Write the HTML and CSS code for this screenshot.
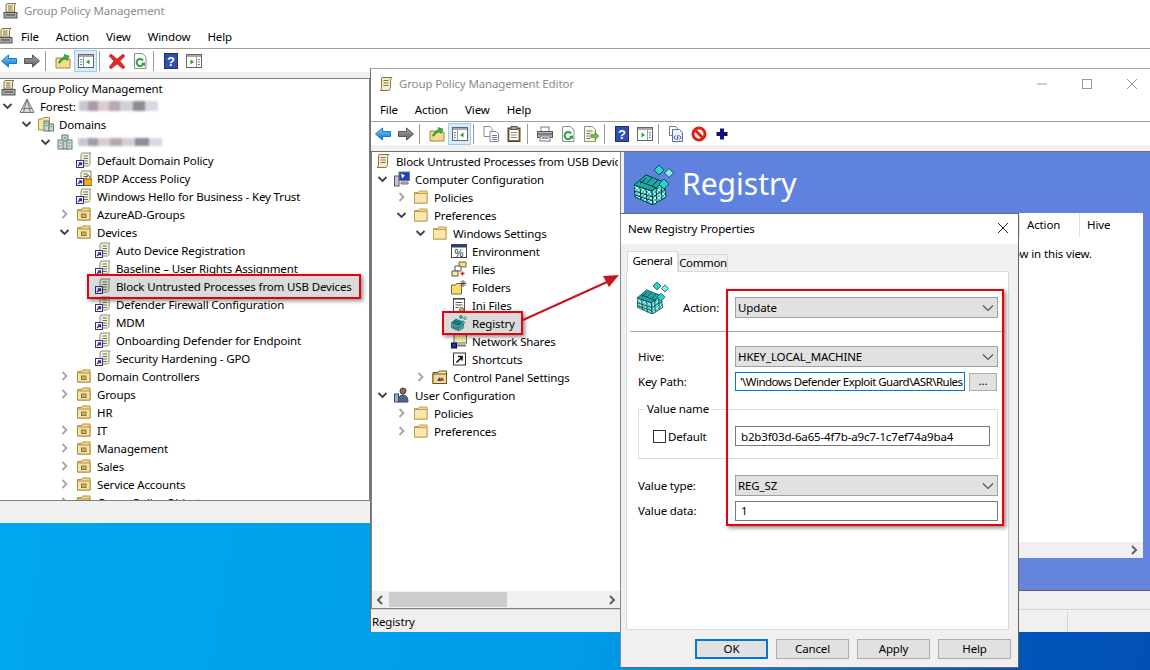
FILE: index.html
```html
<!DOCTYPE html>
<html>
<head>
  <title>Group Policy Management</title>
  <link rel="stylesheet" href="styles.css">
</head>
<body>
<svg class="defs" width="0" height="0">
  <defs>
    <pattern id="chk" width="4" height="4" patternUnits="userSpaceOnUse"><rect width="4" height="4" fill="#28c4c4"/><rect width="2" height="2" fill="#c4f6f2"/><rect x="2" y="2" width="2" height="2" fill="#c4f6f2"/></pattern>
    <linearGradient id="blueArrow" x1="0" y1="0" x2="0" y2="1"><stop offset="0" stop-color="#7fd0f7"/><stop offset="1" stop-color="#0a70c8"/></linearGradient>
    <linearGradient id="grayArrow" x1="0" y1="0" x2="0" y2="1"><stop offset="0" stop-color="#a8a8a8"/><stop offset="1" stop-color="#5c5c5c"/></linearGradient>
  </defs>
  <symbol id="scroll" viewBox="0 0 16 16"><path d="M4 1.500h10c-1 1-1.500 2-1.500 3v7c0 1.500-1 3-2.500 3H2c1-.5 1.500-1.500 1.500-2.500v-8C3.500 2 3.500 2 4 1.500z" fill="#f6ecc8" stroke="#85754a"/><path d="M5.500 4.500h5M5.500 7h5M5.500 9.500h5" stroke="#85754a"/></symbol>
  <symbol id="gpmc" viewBox="0 0 16 16"><path d="M4 .5h9c-1 .8-1.500 1.500-1.500 2.500v6H3V2z" fill="#f6ecc8" stroke="#85754a"/><path d="M5 3h4.500M5 5h4.500M5 7h4.500" stroke="#85754a"/><rect x="1" y="9.500" width="13" height="5.500" fill="#a8a8a8" stroke="#555"/><path d="M3 12h9" stroke="#444"/></symbol>
  <symbol id="gpo" viewBox="0 0 16 16"><path d="M6 1h9c-.8.8-1 1.500-1 2.500v8c0 1.500-1 2.500-2 2.500H5V3z" fill="#f7f2dc" stroke="#8a8a7a"/><path d="M7.500 4h4.500M7.500 6.500h4.500M7.500 9h4.500M7.500 11.500h4.500" stroke="#6e6e60"/><rect x=".5" y="8.500" width="7" height="7" fill="#fff" stroke="#33337a"/><path d="M2 14l3-3M2.800 10.800h2.700v2.700" fill="none" stroke="#2a2aa8" stroke-width="1.300"/></symbol>
  <symbol id="gpolock" viewBox="0 0 16 16"><path d="M6 1h9v10H5V3z" fill="#f7f2dc" stroke="#8a8a7a"/><path d="M7.500 4h4.500M7.500 6.500h4.500" stroke="#6e6e60"/><rect x="8" y="9" width="8" height="6.500" fill="#e8b020" stroke="#8a6a10"/><path d="M10 9V7.500a2 2 0 0 1 4 0V9" fill="none" stroke="#8a6a10"/><rect x=".5" y="8.500" width="7" height="7" fill="#fff" stroke="#33337a"/><path d="M2 14l3-3M2.800 10.800h2.700v2.700" fill="none" stroke="#2a2aa8" stroke-width="1.300"/></symbol>
  <symbol id="forest" viewBox="0 0 16 16"><path d="M8 1l7 13.500H1z" fill="#dcdcdc" stroke="#777"/><path d="M8 1L4.500 14.500M8 1l3.500 13.500M3 10.500h10" stroke="#777" fill="none"/></symbol>
  <symbol id="ou" viewBox="0 0 16 16"><path d="M1.500 3.500h4l1-1.500h7.500v12h-12.500z" fill="#f3d98f" stroke="#b09040"/><rect x="1.500" y="5" width="12.500" height="9" fill="#f6e3a6" stroke="#b09040"/><rect x="5.500" y="8" width="4.500" height="3.500" fill="#c9b477" stroke="#8a7430"/></symbol>
  <symbol id="folder" viewBox="0 0 16 16"><path d="M1.500 3.500h4l1-1.500h7.500v12h-12.500z" fill="#f3d98f" stroke="#c0a050"/><rect x="1.500" y="4.500" width="12.500" height="9.500" fill="#fbe7ae" stroke="#c0a050"/></symbol>
  <symbol id="domains" viewBox="0 0 16 16"><path d="M.5 3h4l1-1.500h6V14H.5z" fill="#f6e3a6" stroke="#b09040"/><rect x="6" y="5" width="5" height="10" fill="#cfd6d6" stroke="#6a7a7a"/><rect x="11" y="8" width="4.500" height="7" fill="#cfd6d6" stroke="#6a7a7a"/><path d="M7.500 7h2M7.500 9.500h2M12.500 10.500h1.500" stroke="#30a040"/></symbol>
  <symbol id="domain" viewBox="0 0 16 16"><rect x="5" y="1" width="6" height="14" fill="#c8d0d0" stroke="#6a7a7a"/><rect x="1" y="6" width="5" height="9" fill="#d8dede" stroke="#6a7a7a"/><rect x="10" y="6" width="5" height="9" fill="#d8dede" stroke="#6a7a7a"/><path d="M7 4h2M7 7h2M2.500 9h2M11.500 9h2M2.500 12h2M11.500 12h2" stroke="#30a040"/></symbol>
  <symbol id="computer" viewBox="0 0 16 16"><rect x="5" y="1" width="10.500" height="8.500" fill="#1a3fc8" stroke="#777"/><path d="M7 2.500l4 2-3 3z" fill="#fff"/><path d="M7 11h7v2H7z" fill="#bbb" stroke="#777"/><rect x=".5" y="5" width="4.500" height="10" fill="#c0c8d8" stroke="#556"/></symbol>
  <symbol id="user" viewBox="0 0 16 16"><circle cx="9" cy="4" r="3" fill="#8a6a50" stroke="#54402e"/><path d="M4 15c0-5 2-7 5-7s5 2 5 7z" fill="#4a6a8a" stroke="#33485e"/><rect x=".5" y="7" width="4" height="8" fill="#8fb2de" stroke="#446"/></symbol>
  <symbol id="env" viewBox="0 0 16 16"><rect x=".5" y="1.500" width="15" height="13" fill="#fff" stroke="#444"/><rect x="1" y="2" width="14" height="2.500" fill="#2a3a8a"/></symbol>
  <symbol id="files" viewBox="0 0 16 16"><path d="M8 1h7v5H8z" fill="#f2dc90" stroke="#806a20"/><path d="M4 5h6v5H4z" fill="#fff" stroke="#555"/><path d="M1 10h6v5H1z" fill="#f8ef9a" stroke="#555"/><path d="M9.500 12.500h4M11.500 10.500v4" stroke="#d02020" stroke-width="1.300"/></symbol>
  <symbol id="folders" viewBox="0 0 16 16"><path d="M.5 6h4l1-1.500h5V15H.5z" fill="#f3e070" stroke="#7a6a20"/><path d="M12 1v7M8.500 4.500h7M9.500 2l5 5M14.500 2l-5 5" stroke="#555"/></symbol>
  <symbol id="ini" viewBox="0 0 16 16"><rect x="2.500" y="1.500" width="11" height="14" fill="#fff" stroke="#555"/><path d="M3 1v2M5 1v2M7 1v2M9 1v2M11 1v2M13 1v2" stroke="#333"/><path d="M4.500 5.500h7M4.500 8h7M4.500 10.500h3" stroke="#555"/><circle cx="10.500" cy="12.500" r="2" fill="#e8c820" stroke="#556"/></symbol>
  <symbol id="cube" viewBox="0 0 40 40"><path d="M12 10l18 7-12 9L0 20z" fill="#1ea8a8" stroke="#063c3c"/><path d="M0 20l18 6 1 14L1 32z" fill="url(#chk)" stroke="#063c3c"/><path d="M18 26l12-9 2 15-13 8z" fill="url(#chk)" stroke="#063c3c"/><path d="M6 22l1 13M12 24l1 14M.5 26l18 6M1 30l18 6M22 23l1 14M27 19l1 16M18.500 32l13-8M6 16.500l18 7M12 13.500l-6 5M18 13l-6 6M24 15l-6 6" fill="none" stroke="#063c3c"/><path d="M25 0l5 5-5 5-5-5z" fill="#30d0d0" stroke="#0a5858"/><path d="M35 3.500l4.500 4.500-4.500 4.500-4.500-4.500z" fill="#8ee8e4" stroke="#0a5858"/><path d="M30 14l5 5-5 5-5-5z" fill="#30d0d0" stroke="#0a5858"/></symbol>
  <symbol id="shares" viewBox="0 0 16 16"><rect x="3" y="1" width="12.500" height="9" fill="#e8e8e0" stroke="#666"/><path d="M4 3h11v5H4z" fill="#f4ee90"/><rect x=".5" y="10" width="5" height="5" fill="#1a2fb0" stroke="#111"/><path d="M6 12.500h9" stroke="#777" stroke-width="2"/></symbol>
  <symbol id="shortcut" viewBox="0 0 16 16"><rect x="2.500" y="2" width="12" height="12" fill="#fff" stroke="#333"/><path d="M5.500 11.500l5-5M7 5.500h4v4" fill="none" stroke="#111" stroke-width="1.600"/></symbol>
  <symbol id="cpanel" viewBox="0 0 16 16"><path d="M1 3.500h5l1-1.500h7.500v12.500H1z" fill="#f6e3a6" stroke="#6a5820"/><rect x="1" y="5" width="13.500" height="9.500" fill="#f3dc8a" stroke="#6a5820"/><path d="M5 12l2.500-4 2.500 4z" fill="#2848c0"/><path d="M7.500 11.500l2.500-3.500 2.500 3.500z" fill="#d03030"/></symbol>
  <symbol id="back" viewBox="0 0 16 16"><path d="M.5 8L7.500 2v3.500h8v5h-8V14z" fill="url(#blueArrow)" stroke="#1478c8"/></symbol>
  <symbol id="fwd" viewBox="0 0 16 16"><path d="M15.500 8L8.500 2v3.500h-8v5h8V14z" fill="url(#grayArrow)" stroke="#555"/></symbol>
  <symbol id="up" viewBox="0 0 16 16"><path d="M1 5h5l1 1h8v9H1z" fill="#f6dc8e" stroke="#a08a40"/><path d="M3.500 10C5 6 7 4 10 3.500L9 1.500l5 1.500-2 4.500-1-2C8.500 6 6 8 5 10z" fill="#38b040" stroke="#1c7c28" stroke-width=".6"/></symbol>
  <symbol id="tree" viewBox="0 0 16 16"><rect x=".5" y="1.500" width="15" height="13" fill="#fff" stroke="#666"/><path d="M1 2h14v2H1z" fill="#a8a8a8"/><path d="M5.500 4v10" stroke="#999"/><path d="M2 6.500h2M2 9h2M2 11.500h2" stroke="#5a7ab0"/><path d="M11.500 6.500v5L8 9z" fill="#28a038"/></symbol>
  <symbol id="pane" viewBox="0 0 16 16"><rect x=".5" y="1.500" width="15" height="13" fill="#fff" stroke="#666"/><path d="M1 2h14v2H1z" fill="#a8a8a8"/><path d="M10.500 4v10" stroke="#999"/><path d="M12 6.500h2M12 9h2M12 11.500h2" stroke="#5a7ab0"/><path d="M4.500 6.500v5L8 9z" fill="#28a038"/></symbol>
  <symbol id="del" viewBox="0 0 16 16"><path d="M2 1l6 5 6-5 2 2-5 5 5 6-2 2-6-5-6 5-2-2 5-6-5-5z" fill="#e0282c" stroke="#b81c20" stroke-width=".5"/></symbol>
  <symbol id="refresh" viewBox="0 0 16 16"><path d="M2.500.5h8l3.500 3.500v11.500H2.500z" fill="#fafafa" stroke="#909090"/><path d="M11 7.500a3.500 3.500 0 1 0 .5 3" fill="none" stroke="#28a048" stroke-width="2"/><path d="M9 10l4-.5 0 4z" fill="#28a048"/></symbol>
  <symbol id="help" viewBox="0 0 16 16"><rect x="1.500" y=".5" width="13" height="15" fill="#2c4fb0" stroke="#1c2f78"/></symbol>
  <symbol id="copy" viewBox="0 0 16 16"><path d="M1 .5h6l2 2v8H1z" fill="#fff" stroke="#888"/><path d="M7 5.500h6l2.500 2.500v7.500H7z" fill="#fff" stroke="#888"/><path d="M9 9.500h5M9 11.500h5M9 13.500h5" stroke="#5a7ab0"/></symbol>
  <symbol id="paste" viewBox="0 0 16 16"><rect x="2" y="2" width="12" height="13.500" fill="#8a6a40" stroke="#5a4020"/><rect x="3.500" y="3.500" width="9" height="10.500" fill="#fff"/><rect x="5" y=".5" width="6" height="3" fill="#a8a8a8" stroke="#555"/><path d="M5 6.500h6M5 9h6M5 11.500h6" stroke="#888"/></symbol>
  <symbol id="print" viewBox="0 0 16 16"><rect x="4" y="1" width="8" height="5" fill="#fff" stroke="#777"/><rect x=".5" y="5.500" width="15" height="6" fill="#b8b8b8" stroke="#555"/><rect x="3" y="10" width="10" height="5" fill="#fff" stroke="#777"/><path d="M1 8h14" stroke="#444"/><path d="M4.500 12h7" stroke="#33a"/></symbol>
  <symbol id="export" viewBox="0 0 16 16"><path d="M1.500.5h8l3 3V15.500h-11z" fill="#fbf5dc" stroke="#909080"/><path d="M3.500 5h6M3.500 7.500h4M3.500 10h4M3.500 12.500h4" stroke="#777"/><path d="M8 8.500h4V6l4 4-4 4v-2.500H8z" fill="#68c050" stroke="#3a8a2c" stroke-width=".6"/></symbol>
  <symbol id="xml" viewBox="0 0 16 16"><path d="M1.500 .5h6l2 2v7h-8z" fill="#fff" stroke="#778"/><path d="M4.500 3.500h7l3 3v9h-10z" fill="#eef2fa" stroke="#5a6a9a"/><path d="M7.500 9.500l-1.500 2 1.500 2M11.500 9.500l1.500 2-1.500 2M10 9l-1 5" fill="none" stroke="#2a3a9a"/></symbol>
  <symbol id="stop" viewBox="0 0 16 16"><circle cx="8" cy="8" r="6" fill="#fff" stroke="#e02010" stroke-width="3"/><path d="M3.500 3.500l9 9" stroke="#e02010" stroke-width="3"/></symbol>
  <symbol id="plus" viewBox="0 0 16 16"><path d="M6 2.500h4v3.500h3.500v4H10v3.500H6V10H2.500V6H6z" fill="#101080"/></symbol>
  <symbol id="open" viewBox="0 0 10 10"><path d="M1 3l4 4 4-4" fill="none" stroke="#404040" stroke-width="1.800"/></symbol>
  <symbol id="closed" viewBox="0 0 10 10"><path d="M3 1l4 4-4 4" fill="none" stroke="#a6a6a6" stroke-width="1.800"/></symbol>
  <symbol id="chev" viewBox="0 0 12 8"><path d="M1 1.500l5 5 5-5" fill="none" stroke="#555" stroke-width="1.200"/></symbol>
</svg>

<!-- back window -->
<div class="window main-win">
  <div class="titlebar">
    <svg class="ico"><use href="#gpmc"/></svg>
    <span class="title">Group Policy Management</span>
  </div>
  <div class="menubar">
    <svg class="ico menu-ico"><use href="#gpmc"/></svg>
    <span>File</span><span>Action</span><span>View</span><span>Window</span><span>Help</span>
  </div>
  <div class="toolbar tb-main">
    <div class="tb"><svg class="ico"><use href="#back"/></svg></div>
    <div class="tb"><svg class="ico"><use href="#fwd"/></svg></div>
    <div class="sep"></div>
    <div class="tb"><svg class="ico"><use href="#up"/></svg></div>
    <div class="tb on"><svg class="ico"><use href="#tree"/></svg></div>
    <div class="sep"></div>
    <div class="tb"><svg class="ico"><use href="#del"/></svg></div>
    <div class="tb"><svg class="ico"><use href="#refresh"/></svg></div>
    <div class="sep"></div>
    <div class="tb"><svg class="ico" viewBox="0 0 16 16"><use href="#help"/><text class="glyph-q" x="8" y="13">?</text></svg></div>
    <div class="tb"><svg class="ico"><use href="#pane"/></svg></div>
  </div>
  <div class="strip"></div>
  <div class="tree main-tree">
    <div class="row d0"><svg class="ico"><use href="#gpmc"/></svg><span>Group Policy Management</span></div>
    <div class="row d1"><svg class="tw"><use href="#open"/></svg><svg class="ico"><use href="#forest"/></svg><span>Forest:</span><i class="blur forest-blur"></i></div>
    <div class="row d2"><svg class="tw"><use href="#open"/></svg><svg class="ico"><use href="#domains"/></svg><span>Domains</span></div>
    <div class="row d3"><svg class="tw"><use href="#open"/></svg><svg class="ico"><use href="#domain"/></svg><i class="blur dom-blur"></i></div>
    <div class="row d4"><b class="tw"></b><svg class="ico"><use href="#gpo"/></svg><span>Default Domain Policy</span></div>
    <div class="row d4"><b class="tw"></b><svg class="ico"><use href="#gpolock"/></svg><span>RDP Access Policy</span></div>
    <div class="row d4"><b class="tw"></b><svg class="ico"><use href="#gpo"/></svg><span>Windows Hello for Business - Key Trust</span></div>
    <div class="row d4"><svg class="tw"><use href="#closed"/></svg><svg class="ico"><use href="#ou"/></svg><span>AzureAD-Groups</span></div>
    <div class="row d4"><svg class="tw"><use href="#open"/></svg><svg class="ico"><use href="#ou"/></svg><span>Devices</span></div>
    <div class="row d5"><b class="tw"></b><svg class="ico"><use href="#gpo"/></svg><span>Auto Device Registration</span></div>
    <div class="row d5"><b class="tw"></b><svg class="ico"><use href="#gpo"/></svg><span>Baseline – User Rights Assignment</span></div>
    <div class="row d5"><b class="tw"></b><svg class="ico"><use href="#gpo"/></svg><span>Block Untrusted Processes from USB Devices</span></div>
    <div class="row d5"><b class="tw"></b><svg class="ico"><use href="#gpo"/></svg><span>Defender Firewall Configuration</span></div>
    <div class="row d5"><b class="tw"></b><svg class="ico"><use href="#gpo"/></svg><span>MDM</span></div>
    <div class="row d5"><b class="tw"></b><svg class="ico"><use href="#gpo"/></svg><span>Onboarding Defender for Endpoint</span></div>
    <div class="row d5"><b class="tw"></b><svg class="ico"><use href="#gpo"/></svg><span>Security Hardening - GPO</span></div>
    <div class="row d4"><svg class="tw"><use href="#closed"/></svg><svg class="ico"><use href="#ou"/></svg><span>Domain Controllers</span></div>
    <div class="row d4"><svg class="tw"><use href="#closed"/></svg><svg class="ico"><use href="#ou"/></svg><span>Groups</span></div>
    <div class="row d4"><b class="tw"></b><svg class="ico"><use href="#ou"/></svg><span>HR</span></div>
    <div class="row d4"><svg class="tw"><use href="#closed"/></svg><svg class="ico"><use href="#ou"/></svg><span>IT</span></div>
    <div class="row d4"><svg class="tw"><use href="#closed"/></svg><svg class="ico"><use href="#ou"/></svg><span>Management</span></div>
    <div class="row d4"><svg class="tw"><use href="#closed"/></svg><svg class="ico"><use href="#ou"/></svg><span>Sales</span></div>
    <div class="row d4"><svg class="tw"><use href="#closed"/></svg><svg class="ico"><use href="#ou"/></svg><span>Service Accounts</span></div>
    <div class="row d4"><svg class="tw"><use href="#closed"/></svg><svg class="ico"><use href="#ou"/></svg><span>Group Policy Objects</span></div>
  </div>
  <div class="statusbar main-status"></div>
</div>

<!-- editor window -->
<div class="window editor-win">
  <div class="titlebar ed-title">
    <svg class="ico"><use href="#scroll"/></svg>
    <span class="title">Group Policy Management Editor</span>
    <div class="caption">
      <svg class="cap" viewBox="0 0 12 12"><path d="M1 6h10" stroke="#999"/></svg>
      <svg class="cap" viewBox="0 0 12 12"><rect x="1.500" y="1.500" width="9" height="9" fill="none" stroke="#999"/></svg>
      <svg class="cap" viewBox="0 0 12 12"><path d="M1 1l10 10M11 1L1 11" stroke="#999"/></svg>
    </div>
  </div>
  <div class="menubar ed-menu"><span>File</span><span>Action</span><span>View</span><span>Help</span></div>
  <div class="toolbar">
    <div class="tb"><svg class="ico"><use href="#back"/></svg></div>
    <div class="tb"><svg class="ico"><use href="#fwd"/></svg></div>
    <div class="sep"></div>
    <div class="tb"><svg class="ico"><use href="#up"/></svg></div>
    <div class="tb on"><svg class="ico"><use href="#tree"/></svg></div>
    <div class="sep"></div>
    <div class="tb"><svg class="ico"><use href="#copy"/></svg></div>
    <div class="tb"><svg class="ico"><use href="#paste"/></svg></div>
    <div class="sep"></div>
    <div class="tb"><svg class="ico"><use href="#print"/></svg></div>
    <div class="tb"><svg class="ico"><use href="#refresh"/></svg></div>
    <div class="tb"><svg class="ico"><use href="#export"/></svg></div>
    <div class="sep"></div>
    <div class="tb"><svg class="ico" viewBox="0 0 16 16"><use href="#help"/><text class="glyph-q" x="8" y="13">?</text></svg></div>
    <div class="tb"><svg class="ico"><use href="#pane"/></svg></div>
    <div class="sep"></div>
    <div class="tb"><svg class="ico"><use href="#xml"/></svg></div>
    <div class="tb"><svg class="ico"><use href="#stop"/></svg></div>
    <div class="tb"><svg class="ico"><use href="#plus"/></svg></div>
  </div>
  <div class="ed-strip"></div>
  <div class="ed-body">
    <div class="ed-left">
      <div class="tree ed-tree">
        <div class="row d0"><svg class="ico"><use href="#scroll"/></svg><span>Block Untrusted Processes from USB Devices</span></div>
        <div class="row d1"><svg class="tw"><use href="#open"/></svg><svg class="ico"><use href="#computer"/></svg><span>Computer Configuration</span></div>
        <div class="row d2"><svg class="tw"><use href="#closed"/></svg><svg class="ico"><use href="#folder"/></svg><span>Policies</span></div>
        <div class="row d2"><svg class="tw"><use href="#open"/></svg><svg class="ico"><use href="#folder"/></svg><span>Preferences</span></div>
        <div class="row d3"><svg class="tw"><use href="#open"/></svg><svg class="ico"><use href="#folder"/></svg><span>Windows Settings</span></div>
        <div class="row d4"><b class="tw"></b><svg class="ico" viewBox="0 0 16 16"><use href="#env"/><text class="glyph-pct" x="8" y="13.500">%</text></svg><span>Environment</span></div>
        <div class="row d4"><b class="tw"></b><svg class="ico"><use href="#files"/></svg><span>Files</span></div>
        <div class="row d4"><b class="tw"></b><svg class="ico"><use href="#folders"/></svg><span>Folders</span></div>
        <div class="row d4"><b class="tw"></b><svg class="ico"><use href="#ini"/></svg><span>Ini Files</span></div>
        <div class="row d4"><b class="tw"></b><svg class="ico"><use href="#cube"/></svg><span>Registry</span></div>
        <div class="row d4"><b class="tw"></b><svg class="ico"><use href="#shares"/></svg><span>Network Shares</span></div>
        <div class="row d4"><b class="tw"></b><svg class="ico"><use href="#shortcut"/></svg><span>Shortcuts</span></div>
        <div class="row d3"><svg class="tw"><use href="#closed"/></svg><svg class="ico"><use href="#cpanel"/></svg><span>Control Panel Settings</span></div>
        <div class="row d1"><svg class="tw"><use href="#open"/></svg><svg class="ico"><use href="#user"/></svg><span>User Configuration</span></div>
        <div class="row d2"><svg class="tw"><use href="#closed"/></svg><svg class="ico"><use href="#folder"/></svg><span>Policies</span></div>
        <div class="row d2"><svg class="tw"><use href="#closed"/></svg><svg class="ico"><use href="#folder"/></svg><span>Preferences</span></div>
      </div>
      <div class="hscroll">
        <svg class="sb-arrow" viewBox="0 0 10 10"><path d="M7 1L3 5l4 4" fill="none" stroke="#606060" stroke-width="2"/></svg>
        <div class="sb-track"><div class="sb-thumb"></div></div>
        <svg class="sb-arrow" viewBox="0 0 10 10"><path d="M3 1l4 4-4 4" fill="none" stroke="#606060" stroke-width="2"/></svg>
      </div>
    </div>
    <div class="ed-right">
      <div class="blue-panel">
        <div class="blue-head">
          <svg class="cube-big"><use href="#cube"/></svg>
          <span>Registry</span>
        </div>
        <div class="list">
          <div class="list-head"><span>Action</span><span>Hive</span></div>
          <div class="list-empty">There are no items to show in this view.</div>
          <div class="list-scroll"><svg class="sb-arrow" viewBox="0 0 10 10"><path d="M3 1l4 4-4 4" fill="none" stroke="#606060" stroke-width="2"/></svg></div>
        </div>
      </div>
      <div class="right-foot"></div>
    </div>
  </div>
  <div class="statusbar ed-status">Registry<i class="status-div"></i></div>
</div>

<!-- properties dialog -->
<div class="window dialog">
  <div class="dlg-title">
    <span>New Registry Properties</span>
    <svg class="dlg-x" viewBox="0 0 12 12"><path d="M1 1l10 10M11 1L1 11" stroke="#222"/></svg>
  </div>
  <div class="dlg-body">
    <div class="tabs">
      <div class="tab active">General</div>
      <div class="tab">Common</div>
    </div>
    <div class="page">
      <div class="form-row action-row">
        <svg class="cube-mid"><use href="#cube"/></svg>
        <label class="lbl-action">Action:</label>
        <div class="combo">Update<svg class="chev"><use href="#chev"/></svg></div>
      </div>
      <div class="hr"></div>
      <div class="form-row"><label>Hive:</label><div class="combo">HKEY_LOCAL_MACHINE<svg class="chev"><use href="#chev"/></svg></div></div>
      <div class="form-row key-row"><label>Key Path:</label><div class="edit focus"><span class="keytext">'\Windows Defender Exploit Guard\ASR\Rules</span></div><div class="dots">...</div></div>
      <fieldset class="group">
        <legend>Value name</legend>
        <div class="check-wrap"><i class="check"></i><span>Default</span></div>
        <div class="edit guid">b2b3f03d-6a65-4f7b-a9c7-1c7ef74a9ba4</div>
      </fieldset>
      <div class="form-row type-row"><label>Value type:</label><div class="combo">REG_SZ<svg class="chev"><use href="#chev"/></svg></div></div>
      <div class="form-row data-row"><label>Value data:</label><div class="edit">1</div></div>
    </div>
    <div class="buttons">
      <div class="btn default">OK</div>
      <div class="btn">Cancel</div>
      <div class="btn">Apply</div>
      <div class="btn">Help</div>
    </div>
  </div>
</div>

<!-- red callouts -->
<div class="mark mark-gpo"></div>
<div class="mark mark-reg"></div>
<div class="mark mark-form"></div>
<svg class="arrow" width="1150" height="670" viewBox="0 0 1150 670">
  <path d="M523 320L607 282" stroke="#c8141c" stroke-width="2"/>
  <path d="M619 275L603 276L609 287z" fill="#c8141c"/>
</svg>
</body>
</html>
```
FILE: styles.css
```css
* {
  box-sizing: border-box;
}

html, body {
  margin: 0;
  padding: 0;
}

body {
  width: 1150px;
  height: 670px;
  position: relative;
  overflow: hidden;
  background: linear-gradient(100deg, #00a8f0 0%, #009ce9 55%, #0056ba 88%, #0250b4 100%);
  font-family: "Noto Sans", "Open Sans", sans-serif;
  font-size: 11.5px;
  letter-spacing: -.14px;
  color: #000;
}

.defs {
  position: absolute;
}

.window {
  position: absolute;
  display: flex;
  flex-direction: column;
  background: #fff;
}

.ico {
  width: 16px;
  height: 16px;
  flex: none;
  display: block;
}

.glyph-q {
  font: 700 13px "Liberation Sans", sans-serif;
  text-anchor: middle;
  fill: #fff;
}

.glyph-pct {
  font: 10px "Liberation Sans", sans-serif;
  text-anchor: middle;
  fill: #222;
}

/* windows */
.main-win {
  left: 0;
  top: 0;
  width: 1150px;
  height: 523px;
}

.editor-win {
  left: 370px;
  top: 68px;
  width: 780px;
  height: 564px;
  border-left: 1px solid #707070;
  border-top: 1px solid #a8a8a8;
}

.dialog {
  left: 620px;
  top: 213px;
  width: 399px;
  height: 455px;
  border: 1px solid #666;
  border-left-color: #888;
}

/* title + menu */
.titlebar {
  height: 25px;
  flex: none;
  display: flex;
  align-items: center;
  gap: 5px;
  padding: 0 0 4px 3px;
}

.title {
  color: #8c8c8c;
}

.ed-title {
  height: 29px;
  gap: 5px;
  padding: 0 0 0 7px;
  position: relative;
}

.caption {
  margin-left: auto;
  display: flex;
  gap: 33px;
  padding-right: 12px;
}

.cap {
  width: 12px;
  height: 12px;
}

.menubar {
  height: 24px;
  flex: none;
  display: flex;
  align-items: center;
  gap: 17px;
  padding-left: 21px;
  border-bottom: 1px solid #a0a0a0;
  position: relative;
}

.menu-ico {
  position: absolute;
  left: -2px;
  top: 3px;
}

.ed-menu {
  padding-left: 9px;
}

.toolbar {
  height: 23px;
  flex: none;
  display: flex;
  align-items: center;
  background: #fff;
}

.tb-main .tb:first-child {
  margin-left: -3px;
}

.tb {
  width: 23px;
  height: 22px;
  display: flex;
  align-items: center;
  justify-content: center;
}

.tb.on {
  background: #d9ebf9;
  border: 1px solid #9fcbee;
}

.sep {
  width: 1px;
  height: 20px;
  background: #9a9a9a;
  margin: 0 5px 0 2px;
}

.strip {
  height: 7px;
  flex: none;
  background: #f0f0f0;
  border-bottom: 1px solid #808080;
}

.ed-strip {
  height: 7px;
  flex: none;
  background: #f0f0f0;
  border-bottom: 1px solid #707070;
}

/* trees */
.tree {
  flex: 1;
  overflow: hidden;
}

.main-tree {
  min-height: 0;
  border-right: 1px solid #808080;
  width: 370px;
}

.row {
  height: 18px;
  display: flex;
  align-items: center;
  white-space: nowrap;
}

.row > span {
  margin-left: 5px;
}

.row.d0 { padding-left: 1px; }
.row.d1 { padding-left: 0; }
.row.d2 { padding-left: 19px; }
.row.d3 { padding-left: 38px; }
.row.d4 { padding-left: 57px; }
.row.d5 { padding-left: 76px; }

.tw {
  width: 19px;
  height: 10px;
  flex: none;
  display: block;
  padding-right: 4px;
}

.blur {
  display: block;
  height: 10px;
  filter: blur(1.2px);
  background: linear-gradient(90deg, #c8c8d4 0 12%, #a89aa8 12% 24%, #d8ccd0 24% 38%, #b8a8b0 38% 52%, #cfd0d8 52% 68%, #8f8a94 68% 84%, #d8d8e4 84%);
}

.forest-blur {
  width: 79px;
  margin-left: 3px;
}

.dom-blur {
  width: 84px;
  margin-left: 5px;
  height: 8px;
}

.main-status {
  border-top: 1px solid #808080;
}

.statusbar {
  height: 23px;
  flex: none;
  background: #f0f0f0;
}

/* editor body */
.ed-body {
  flex: 1;
  display: flex;
  min-height: 0;
}

.ed-left {
  width: 250px;
  flex: none;
  display: flex;
  flex-direction: column;
  border: 1px solid #808080;
  border-top: 0;
}

.ed-tree {
  min-height: 0;
  margin-left: 3px;
}

.ed-tree .row.d0 {
  padding-left: 0;
}

.ed-tree .row.d0 > span {
  width: 222px;
  overflow: hidden;
}

.hscroll {
  height: 17px;
  flex: none;
  display: flex;
  align-items: center;
  background: #f0f0f0;
}

.sb-arrow {
  width: 10px;
  height: 10px;
  margin: 0 3px;
  flex: none;
}

.sb-track {
  flex: 1;
  height: 15px;
}

.sb-thumb {
  width: 118px;
  height: 15px;
  background: #cdcdcd;
  margin-left: 1px;
}

.ed-right {
  flex: 1;
  display: flex;
  flex-direction: column;
  background: #f0f0f0;
  padding-left: 3px;
}

.blue-panel {
  height: 438px;
  flex: none;
  background: linear-gradient(180deg, #5f82de, #6484de);
  display: flex;
  flex-direction: column;
  padding-right: 7px;
}

.blue-head {
  height: 61px;
  flex: none;
  display: flex;
  align-items: center;
  gap: 8px;
  padding: 5px 0 0 10px;
  color: #fff;
  font-size: 30px;
  letter-spacing: 0;
}

.blue-head span {
  margin-top: -4px;
}

.cube-big {
  width: 40px;
  height: 40px;
  flex: none;
}

.list {
  flex: 1;
  background: #fff;
  margin-bottom: 32px;
  display: flex;
  flex-direction: column;
}

.list-head {
  height: 24px;
  flex: none;
  display: flex;
  justify-content: flex-end;
  align-items: center;
}

.list-head span {
  width: 60px;
  padding-left: 7px;
  border-left: 1px solid #e0e0e0;
  height: 24px;
  line-height: 24px;
}

.list-head span:last-child {
  width: 64px;
}

.list-empty {
  flex: 1;
  text-align: right;
  padding: 9px 51px 0 0;
}

.list-scroll {
  height: 16px;
  flex: none;
  background: #f0f0f0;
  display: flex;
  justify-content: flex-end;
  align-items: center;
  padding-right: 1px;
}

.right-foot {
  flex: 1;
  border-top: 1px solid #606060;
  margin-left: -3px;
}

.ed-status {
  border-top: 1px solid #d4d4d4;
  padding: 4px 0 0 1px;
  position: relative;
}

.status-div {
  position: absolute;
  left: 696px;
  top: 2px;
  width: 1px;
  height: 20px;
  background: #d4d4d4;
}

/* dialog */
.dlg-title {
  height: 30px;
  flex: none;
  display: flex;
  align-items: center;
  justify-content: space-between;
  padding: 0 9px 2px 7px;
}

.dlg-x {
  width: 12px;
  height: 12px;
}

.dlg-body {
  flex: 1;
  background: #f0f0f0;
  padding: 7px 9px 0 5px;
  display: flex;
  flex-direction: column;
}

.tabs {
  display: flex;
  height: 20px;
  padding-left: 1px;
  align-items: flex-end;
  position: relative;
  z-index: 1;
}

.tab {
  height: 17px;
  width: 50px;
  text-align: center;
  background: #f0f0f0;
  border: 1px solid #d9d9d9;
  border-bottom: 0;
  line-height: 16px;
  letter-spacing: -.35px;
}

.tab.active {
  width: 51px;
  height: 21px;
  background: #fff;
  margin-bottom: -1px;
  line-height: 17px;
}

.page {
  height: 359px;
  flex: none;
  background: #fff;
  border: 1px solid #d9d9d9;
  padding: 25px 10px 0 11px;
}

.form-row {
  display: flex;
  align-items: center;
  height: 21px;
}

.form-row > label {
  width: 97px;
  flex: none;
}

.action-row {
  position: relative;
  padding-left: 45px;
}

.action-row .lbl-action {
  width: 52px;
}

.cube-mid {
  position: absolute;
  left: -1px;
  top: -15px;
  width: 32px;
  height: 32px;
}

.hr {
  height: 1px;
  background: #a8a8a8;
  margin: 13px -7px 14px -8px;
}

.combo {
  flex: 1;
  height: 21px;
  background: #e1e1e1;
  border: 1px solid #a0a0a0;
  padding-left: 2px;
  display: flex;
  align-items: center;
  justify-content: space-between;
}

.chev {
  width: 12px;
  height: 8px;
  margin-right: 3px;
}

.edit {
  flex: 1;
  height: 20px;
  background: #fff;
  border: 1px solid #7a7a7a;
  padding-left: 5px;
  display: flex;
  align-items: center;
  white-space: nowrap;
  overflow: hidden;
}

.key-row {
  margin-top: 5px;
  height: 19px;
}

.edit.focus {
  height: 19px;
  border-color: #0078d7;
  padding-left: 4px;
}

.keytext {
  border-right: 1px solid #000;
  height: 15px;
  line-height: 15px;
  padding-right: 1px;
  letter-spacing: -.52px;
}

.dots {
  width: 28px;
  height: 18px;
  flex: none;
  margin: 0 1px 0 4px;
  background: #e1e1e1;
  border: 1px solid #adadad;
  text-align: center;
  line-height: 14px;
}

.group {
  display: block;
  margin: 12px 0 0 0;
  padding: 0 7px 0 14px;
  height: 56px;
  border: 1px solid #dcdcdc;
}

.group legend {
  padding: 0 2px;
  margin-left: -8px;
  line-height: 12px;
}

.check-wrap {
  width: 82px;
  float: left;
  margin-top: 14px;
  display: flex;
  align-items: center;
  gap: 2px;
}

.check {
  display: block;
  width: 13px;
  height: 13px;
  border: 1px solid #333;
  background: #fff;
}

.guid {
  width: 255px;
  float: left;
  margin-top: 11px;
}

.type-row {
  margin-top: 16px;
}

.data-row {
  margin-top: 4px;
}

.buttons {
  display: flex;
  justify-content: flex-end;
  gap: 8px;
  padding-top: 9px;
  margin-right: -2px;
}

.btn {
  width: 73px;
  height: 20px;
  background: #e1e1e1;
  border: 1px solid #adadad;
  text-align: center;
  line-height: 18px;
}

.btn.default {
  border: 2px solid #0078d7;
  line-height: 16px;
}

/* red callouts */
.mark {
  position: absolute;
  border: 2px solid #e8000c;
  box-shadow: 2px 2px 4px rgba(0, 0, 0, .45);
}

.mark-gpo {
  left: 87px;
  top: 274px;
  width: 274px;
  height: 25px;
  background: rgba(0, 0, 0, .14);
}

.mark-reg {
  left: 442px;
  top: 311px;
  width: 81px;
  height: 24px;
  background: rgba(0, 0, 0, .14);
}

.mark-form {
  left: 726px;
  top: 289px;
  width: 278px;
  height: 237px;
}

.arrow {
  position: absolute;
  left: 0;
  top: 0;
  pointer-events: none;
}
```
